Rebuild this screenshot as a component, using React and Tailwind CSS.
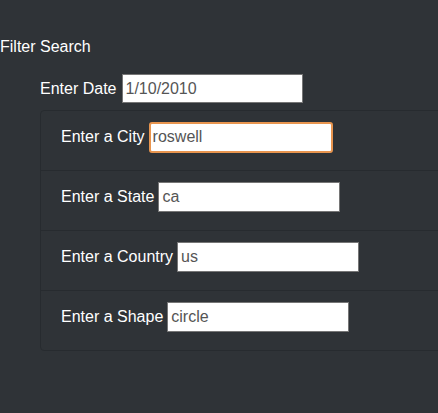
import React from 'react';

const fields = [
  { label: 'Enter a City', value: 'roswell', focused: true },
  { label: 'Enter a State', value: 'ca' },
  { label: 'Enter a Country', value: 'us' },
  { label: 'Enter a Shape', value: 'circle' },
];

const App = () => {
  return (
    <div className="w-[438px] h-[413px] overflow-hidden bg-[#2f3337] text-white font-['Liberation_Sans',Arial,sans-serif] text-[16px]">
      <div className="pt-[38px] leading-[18px]">Filter Search</div>
      <div className="ml-[40px] mt-[18px] flex items-center h-[29px]">
        <label className="mr-[6px]">Enter Date</label>
        <input
          type="text"
          defaultValue="1/10/2010"
          className="w-[181px] h-[29px] bg-white border border-[#767676] text-[#555] px-[2px] outline-none"
        />
      </div>
      <ul className="ml-[40px] mt-[7px] w-[520px] border border-[#272b2f] rounded-[4px]">
        {fields.map((f, i) => (
          <li
            key={f.label}
            className={`flex items-start pl-[20px] ${i > 0 ? 'h-[60px] pt-[11px] border-t border-[#272b2f]' : 'h-[59px] pt-[11px]'}`}
          >
            <div className="flex items-center h-[30px]">
              <label className="mr-[4px]">{f.label}</label>
              {f.focused ? (
                <input
                  type="text"
                  defaultValue={f.value}
                  className="w-[184px] h-[31px] bg-white border-2 border-[#e8954f] rounded-[3px] text-[#555] px-[2px] outline-none"
                />
              ) : (
                <input
                  type="text"
                  defaultValue={f.value}
                  className="w-[182px] h-[30px] bg-white border border-[#767676] text-[#555] px-[3px] outline-none"
                />
              )}
            </div>
          </li>
        ))}
      </ul>
    </div>
  );
};

export default App;
